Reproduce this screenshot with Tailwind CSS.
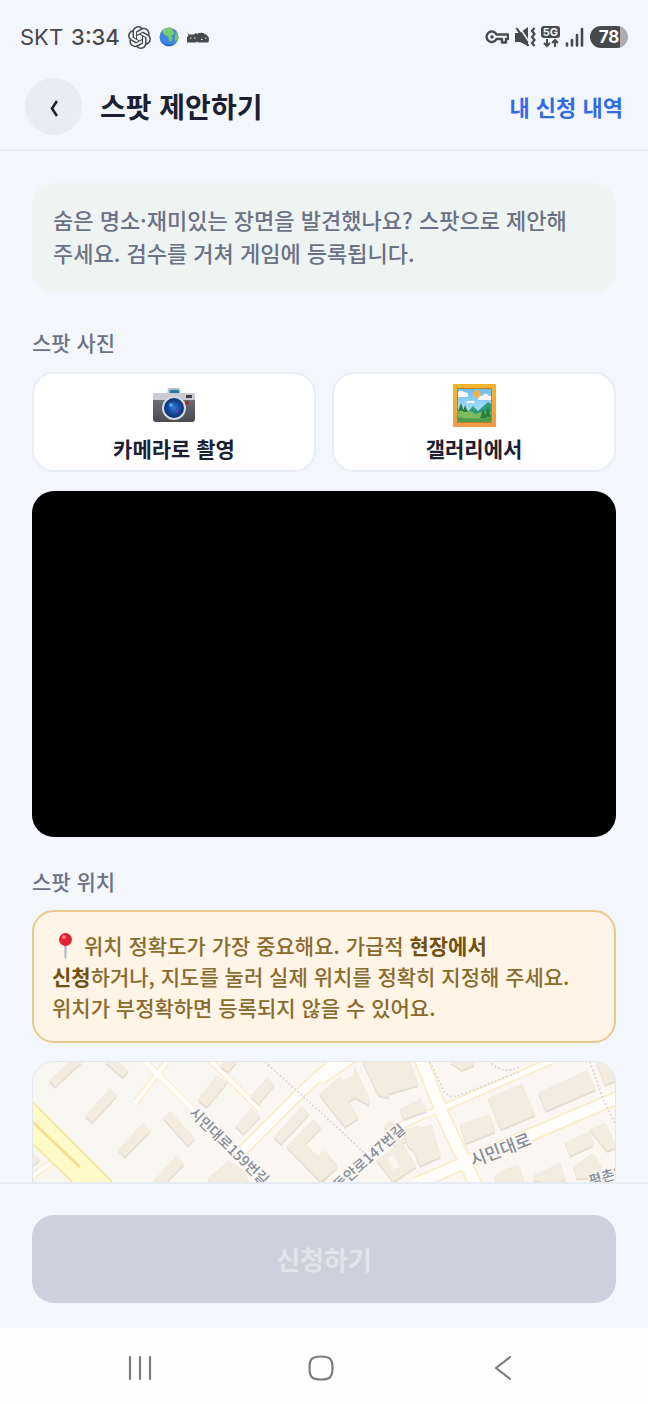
<!DOCTYPE html>
<html lang="ko">
<head>
  <meta charset="UTF-8" />
  <meta name="viewport" content="width=device-width, initial-scale=1.0" />
  <title>스팟 제안하기</title>
  <script src="https://cdn.jsdelivr.net/npm/@tailwindcss/browser@4"></script>
</head>
<body class="h-screen flex flex-col overflow-hidden bg-[#f3f6fb] text-[#1b2132] font-['Noto_Sans_CJK_KR',sans-serif] break-keep">

  <!-- Status bar -->
  <div class="h-[74px] shrink-0 px-5 flex items-center justify-between text-[#48494c]">
    <div class="flex items-center gap-2 text-[22px] leading-6 font-['Inter',sans-serif]">
      <span>SKT</span>
      <span class="font-medium">3:34</span>
      <svg class="size-[23px]" viewBox="0 0 24 24" fill="currentColor"><path d="M22.28 9.82a5.98 5.98 0 0 0-.52-4.91 6.05 6.05 0 0 0-6.51-2.9A6.07 6.07 0 0 0 4.98 4.18a5.98 5.98 0 0 0-4 2.9 6.05 6.05 0 0 0 .74 7.1 5.98 5.98 0 0 0 .51 4.91 6.05 6.05 0 0 0 6.51 2.9A5.98 5.98 0 0 0 13.26 24a6.06 6.06 0 0 0 5.77-4.21 5.99 5.99 0 0 0 4-2.9 6.06 6.06 0 0 0-.75-7.07zM13.26 22.43a4.48 4.48 0 0 1-2.88-1.04l.14-.08 4.78-2.76a.8.8 0 0 0 .39-.68v-6.74l2.02 1.17a.07.07 0 0 1 .04.05v5.58a4.5 4.5 0 0 1-4.49 4.5zM3.6 18.3a4.47 4.47 0 0 1-.54-3.01l.14.08 4.78 2.76a.77.77 0 0 0 .78 0l5.84-3.37v2.33a.08.08 0 0 1-.03.06L9.74 19.95a4.5 4.5 0 0 1-6.14-1.65zM2.34 7.9a4.49 4.49 0 0 1 2.37-1.98v5.68a.77.77 0 0 0 .39.68l5.81 3.35-2.02 1.17a.08.08 0 0 1-.07 0l-4.83-2.79A4.5 4.5 0 0 1 2.34 7.87zm16.6 3.86-5.84-3.39L15.12 7.2a.08.08 0 0 1 .07 0l4.83 2.79a4.49 4.49 0 0 1-.68 8.1v-5.68a.79.79 0 0 0-.4-.66zm2.01-3.02-.14-.09-4.77-2.78a.78.78 0 0 0-.79 0L9.41 9.23V6.9a.07.07 0 0 1 .03-.06l4.83-2.79a4.5 4.5 0 0 1 6.68 4.66zM8.31 12.86l-2.02-1.16a.08.08 0 0 1-.04-.06V6.07a4.5 4.5 0 0 1 7.38-3.45l-.14.08-4.78 2.76a.8.8 0 0 0-.39.68zm1.1-2.36 2.6-1.5 2.6 1.5v3l-2.6 1.5-2.6-1.5z"/></svg>
      <svg class="size-5" viewBox="0 0 20 20">
        <circle cx="10" cy="10" r="9.500" fill="#3f86dc"/>
        <path d="M4 3Q10-1 14 1.500L13.500 4l2 1-1 3-2.500 1 1.500 2-1.500 4-2-1.500-.5-3.500L6 8 3.500 6z" fill="#7acb69"/>
        <path d="M17 5l1.500 2 1 4-1.500 4-2-1-.5-4z" fill="#74c365"/>
        <path d="M3 15q5 4 11 2-4 4-9 0z" fill="#2b62b5"/>
      </svg>
      <svg class="w-[22px] h-3" viewBox="0 0 22 12">
        <path d="M0 11.500V6l1.500-1.500L.5 2l2 1.500h4L9 2l1 1 2-1q4-1 6 1 4 2 4 5l-.5 3.500H11l-1-1-1 1z" fill="currentColor"/>
        <path d="M3 7h1.500M7 7h1.500M14 8.500h1.500M18 7h1.500" stroke="#f3f6fb" stroke-width="1"/>
      </svg>
    </div>
    <div class="flex items-center gap-[5px]">
      <svg class="w-6 h-[22px]" viewBox="0 0 24 22" fill="none" stroke="currentColor" stroke-width="2.400">
        <path d="M11.500 8.500H23V13h-2v3.500h-4V13h-5.500a5.200 5.200 0 1 1 0-4.500z" stroke-linejoin="round"/>
        <circle cx="7" cy="11" r="1.800" fill="currentColor" stroke="none"/>
      </svg>
      <svg class="w-[22px] h-[22px]" viewBox="0 0 22 22" fill="none" stroke="currentColor" stroke-width="2.200">
        <path d="M1 7h5l8-6v19l-8-4H1z" fill="currentColor" stroke="none"/>
        <path d="M5 1l11 16" stroke="#f3f6fb" stroke-width="1.500"/>
        <path d="M2.500 2l12 18"/>
        <path d="M20.500 2l-2.500 3 2.500 3-2.500 3 2.500 3-2.500 3 2.500 3"/>
      </svg>
      <div class="w-[19px] flex flex-col items-center">
        <span class="w-full h-3 rounded-[3px] bg-[#48494c] text-[#f3f6fb] text-[11px] leading-3 font-bold text-center font-['Inter',sans-serif]">5G</span>
        <svg class="w-4 h-[10px]" viewBox="0 0 16 10" fill="none" stroke="currentColor" stroke-width="2"><path d="M4 1v7M1 5l3 3 3-3M12 9V2M9 5l3-3 3 3"/></svg>
      </div>
      <svg class="w-5 h-[22px]" viewBox="0 0 20 22" fill="none" stroke="currentColor" stroke-width="2.600" stroke-linecap="round"><path d="M2 17.500v2M7 14v5.500M12 9v10.500M17 3v16.500"/></svg>
      <div class="w-[38px] h-[22px] rounded-full bg-linear-to-r from-[#48494c] from-78% to-[#abadb1] to-78% text-white text-[17px] leading-[22px] font-bold text-center font-['Inter',sans-serif]">78</div>
    </div>
  </div>

  <header class="h-[77px] shrink-0 px-[25px] pb-[11px] flex items-center border-b-2 border-[#e9edf3]">
    <button class="size-[57px] rounded-full bg-[#e9ecf1] flex items-center justify-center" aria-label="뒤로">
      <svg class="w-2 h-[17px] mt-1" viewBox="0 0 8 17" fill="none" stroke="#1b2132" stroke-width="2.600"><path d="M7 1L2 8.500 7 16"/></svg>
    </button>
    <h1 class="ml-[18px] text-[28px] leading-10 font-bold">스팟 제안하기</h1>
    <a href="#" class="ml-auto text-[22px] leading-8 font-bold text-[#336be6]">내 신청 내역</a>
  </header>

  <main class="flex-1 min-h-0 overflow-hidden px-8 pt-8">
    <p class="rounded-[22px] bg-[#eef4f2] px-[21px] pt-5 pb-6 text-[22px] leading-[33px] font-medium text-[#6b7286]">숨은 명소·재미있는 장면을 발견했나요? 스팟으로 제안해 주세요. 검수를 거쳐 게임에 등록됩니다.</p>

    <h2 class="mt-[33px] text-[21px] leading-8 font-medium text-[#6b7286]">스팟 사진</h2>
    <div class="mt-[14px] grid grid-cols-2 gap-4">
      <button class="h-[100px] rounded-[22px] border-2 border-[#e9edf4] bg-white flex flex-col items-center justify-center gap-1 pt-0.5">
        <svg class="w-11 h-[46px]" viewBox="0 0 44 46">
          <defs>
            <linearGradient id="camBody" x1="0" y1="0" x2="0" y2="1"><stop offset="0" stop-color="#77777f"/><stop offset="1" stop-color="#4b4a52"/></linearGradient>
            <radialGradient id="lens"><stop offset="0" stop-color="#2f7fe0"/><stop offset=".5" stop-color="#1553a8"/><stop offset="1" stop-color="#0c2f66"/></radialGradient>
          </defs>
          <path d="M15 12l1-6q0-1 2-1h8q2 0 2 1l1 6z" fill="#b9bbc4"/>
          <rect x="18" y="7" width="9" height="5" rx="1" fill="#247d9c"/>
          <rect x="1" y="10" width="42" height="29" rx="3" fill="url(#camBody)"/>
          <path d="M1 17v-4q0-3 3-3h36q3 0 3 3v4z" fill="#c9cad2"/>
          <rect x="34" y="12" width="6" height="3" fill="#3f4048"/>
          <circle cx="35" cy="20" r="2" fill="#a22b3b"/>
          <circle cx="22" cy="25" r="12" fill="#d5d9e3"/>
          <circle cx="22" cy="25" r="10" fill="url(#lens)"/>
          <circle cx="19" cy="22" r="2" fill="#4fa1f2"/>
          <circle cx="25" cy="28" r="2" fill="#5446ba"/>
        </svg>
        <span class="text-[21px] leading-[30px] font-bold">카메라로 촬영</span>
      </button>
      <button class="h-[100px] rounded-[22px] border-2 border-[#e9edf4] bg-white flex flex-col items-center justify-center gap-1 pt-0.5">
        <svg class="w-11 h-[46px]" viewBox="0 0 44 46">
          <defs>
            <linearGradient id="frame" x1="0" y1="0" x2="0" y2="1"><stop offset="0" stop-color="#f3b52c"/><stop offset="1" stop-color="#f19a4b"/></linearGradient>
            <linearGradient id="sky" x1="0" y1="0" x2="0" y2="1"><stop offset="0" stop-color="#6dbcf0"/><stop offset="1" stop-color="#c6f1fa"/></linearGradient>
          </defs>
          <rect x="1" y="1" width="43" height="43" rx="1" fill="url(#frame)"/>
          <rect x="5" y="5" width="35" height="35" fill="#c2802b"/>
          <rect x="6" y="6" width="33" height="33" fill="url(#sky)"/>
          <circle cx="25" cy="11" r="3.700" fill="#f2b24a"/>
          <path d="M6 14v-5q3-3 6 0 5 0 4 5zM26 17q0-4 4-4 4-5 7 0h2v4zM14 20q1-3 4-2 5-1 5 2z" fill="#fbf6fc"/>
          <path d="M13 32l8-9 5 5 10-9 3 2v13H13z" fill="#2e9a80"/>
          <path d="M6 27q10-1 17 4 8-3 16-2v10H6z" fill="#7cbc5c"/>
          <path d="M6 34q15 3 33 0v5H6z" fill="#4d9d4d"/>
          <path d="M9 20l-3 8h6zM13 22l-2 7h5zM31 26l-3 9h7zM36 23l-3 11h6z" fill="#26803f"/>
        </svg>
        <span class="text-[21px] leading-[30px] font-bold">갤러리에서</span>
      </button>
    </div>
    <div class="mt-[19px] h-[346px] rounded-[22px] bg-black"></div>

    <h2 class="mt-7 text-[21px] leading-8 font-medium text-[#6b7286]">스팟 위치</h2>
    <p class="mt-[13px] rounded-[22px] border-2 border-[#e9c98c] bg-[#fff4e5] pl-[18px] pr-6 py-[18px] text-[21px] leading-[31px] font-medium text-[#8a6b2e]"><svg class="inline-block w-[26px] h-7 mr-[6px] align-[-6px]" viewBox="0 0 26 28"><path d="M12 12h3l-.5 13-1 3-1-3z" fill="#b9bdc7"/><circle cx="13.500" cy="7.500" r="6.500" fill="#e32238"/><circle cx="12" cy="5" r="2" fill="#fa7f88"/></svg>위치 정확도가 가장 중요해요. 가급적 <strong class="font-bold text-[#705113]">현장에서 신청</strong>하거나, 지도를 눌러 실제 위치를 정확히 지정해 주세요. 위치가 부정확하면 등록되지 않을 수 있어요.</p>

    <!-- Map -->
    <div class="mt-[18px] h-80 rounded-[22px] border border-[#e2e6ee] overflow-hidden bg-[#faf7f2]">
      <svg class="w-full h-full" viewBox="39 36 1746 960" preserveAspectRatio="xMidYMin slice">
        <path d="M39 36H700L400 420H39z" fill="#f8f6f0"/>
        <!-- main roads -->
        <g fill="none" stroke="#fbecc6">
          <path d="M360 20L530 190L720 370M440 36L345 160M570 30L720 180M30 385L110 325" stroke-width="20"/>
          <path d="M950 30L850 120L670 300M900 90L1000 20" stroke-width="36"/>
          <path d="M1200 20L1270 200L1370 410" stroke-width="44"/>
          <path d="M1190 400L1330 340L1800 140" stroke-width="42"/>
          <path d="M1130 235L1200 200L1260 178L1600 30" stroke-width="24"/>
        </g>
        <g fill="none" stroke="#fffefa">
          <path d="M360 20L530 190L720 370" stroke-width="15"/>
          <path d="M440 36L345 160M570 30L720 180M30 385L110 325" stroke-width="12"/>
          <path d="M950 30L850 120L670 300M900 90L1000 20" stroke-width="26"/>
          <path d="M1200 20L1270 200L1370 410" stroke-width="34"/>
          <path d="M1190 400L1330 340L1800 140" stroke-width="32"/>
          <path d="M1130 235L1200 200L1260 178L1600 30" stroke-width="15"/>
        </g>
        <path d="M30 148L285 404H165L30 274z" fill="#fffac7" stroke="#f8e6a0" stroke-width="5"/>
        <path d="M30 208L180 352" stroke="#f5df92" stroke-width="8"/>
        <!-- footpaths -->
        <path d="M735 36L960 240L1050 325M1230 36L1270 120Q1290 150 1320 135L1500 65M1415 40Q1450 75 1500 50M1710 36L1750 150L1785 220" fill="none" stroke="#d3d3d5" stroke-width="5" stroke-dasharray="5 7"/>
        <g id="blocks"></g>
        <g font-family="Noto Sans CJK KR, sans-serif" font-weight="500" fill="#868d99" stroke="#faf8f4" stroke-width="7" paint-order="stroke" text-anchor="middle" dominant-baseline="central">
          <text transform="translate(630 286) rotate(44)" font-size="43">시민대로159번길</text>
          <text transform="translate(1045 318) rotate(-42)" font-size="43">동안로147번길</text>
          <text transform="translate(1440 296) rotate(-21)" font-size="52">시민대로</text>
          <text transform="translate(1782 368) rotate(-16)" font-size="43">평촌대로</text>
        </g>
      </svg>
    </div>
  </main>

  <footer class="shrink-0 border-t-2 border-[#e6eaf1] px-8 pt-[31px] pb-[25px]">
    <button class="w-full h-[88px] rounded-[22px] bg-[#cdd1de] pb-0.5 text-[26px] font-bold text-[#e1e4eb]" disabled>신청하기</button>
  </footer>

  <nav class="h-[76px] shrink-0 bg-[#fdfdfd] px-[77px] pt-[3px] grid grid-cols-[126px_1fr_126px] items-center text-[#7c7c7c]">
    <button class="flex justify-center" aria-label="최근 앱"><svg class="w-[26px] h-[26px]" viewBox="0 0 26 26" stroke="currentColor" stroke-width="2.200" stroke-linecap="round"><path d="M3 2v22M13 2v22M23 2v22"/></svg></button>
    <button class="flex justify-center pr-1.5" aria-label="홈"><svg class="w-[26px] h-[26px]" viewBox="0 0 26 26" fill="none" stroke="currentColor" stroke-width="2.200"><path d="M13 1.500c9 0 11.500 2.500 11.500 11.500S22 24.500 13 24.500 1.500 22 1.500 13 4 1.500 13 1.500z"/></svg></button>
    <button class="flex justify-center pr-2.5" aria-label="뒤로 가기"><svg class="w-[18px] h-[26px]" viewBox="0 0 18 26" fill="none" stroke="currentColor" stroke-width="2.200" stroke-linecap="round" stroke-linejoin="round"><path d="M16 2L2 13l14 11"/></svg></button>
  </nav>

  <script>
    const BUILDINGS = [
      '88,92 150,36 185,36 105,110',
      '255,36 290,36 326,62 308,82',
      '195,198 270,117 290,138 217,217',
      '430,205 450,185 525,265 505,287',
      '295,300 370,220 390,243 315,320',
      '395,400 470,318 492,342 435,400',
      '533,150 590,78 622,97 560,170',
      '600,50 615,36 650,36 625,65',
      '692,140 740,85 763,105 715,162',
      '647,228 695,175 720,200 670,252',
      '762,262 845,170 867,193 783,282',
      '800,290 880,208 903,233 855,282 897,322 915,303 953,348 905,398',
      '566,385 625,333 665,358 690,400 566,400',
      '39,310 60,330 39,345',
      '898,132 960,82 965,92 1000,80 1005,55 1050,150 1045,165 1005,142 985,155 1015,205 975,230 960,212',
      '1028,36 1170,36 1195,105 1110,130 1105,142 1075,135',
      '1092,230 1110,212 1145,245 1195,228 1210,245 1125,292',
      '1140,180 1200,147 1220,182 1150,208',
      '1150,248 1235,225 1262,320 1200,347 1180,300 1165,290',
      '1070,332 1145,275 1188,350 1120,395',
      '900,310 915,305 952,352 900,395',
      '1320,225 1408,193 1425,245 1338,280',
      '1405,145 1505,103 1545,195 1442,238',
      '1555,130 1700,62 1728,118 1578,182',
      '1730,40 1785,36 1785,92 1755,104',
      '1290,36 1362,36 1362,45 1325,60',
      '1635,280 1710,245 1720,285 1650,318',
      '1710,240 1755,220 1775,258 1785,295 1760,302',
      '1660,350 1720,310 1745,355 1700,385 1670,385',
      '1425,380 1440,365 1495,345 1515,400 1425,400',
      '1540,390 1545,375 1620,340 1635,390 1600,400',
    ];
    // shadow first, then the roof
    document.getElementById('blocks').innerHTML = BUILDINGS.map(points => `
      <polygon points="${points}" transform="translate(0 6)" fill="#e3dcd0" />
      <polygon points="${points}" fill="#f3ede1" stroke="#ede6da" stroke-width="2" />
    `).join('') + '<polygon points="1102,325 1118,315 1138,348 1120,360" fill="#faf7f2" />';
  </script>
</body>
</html>
